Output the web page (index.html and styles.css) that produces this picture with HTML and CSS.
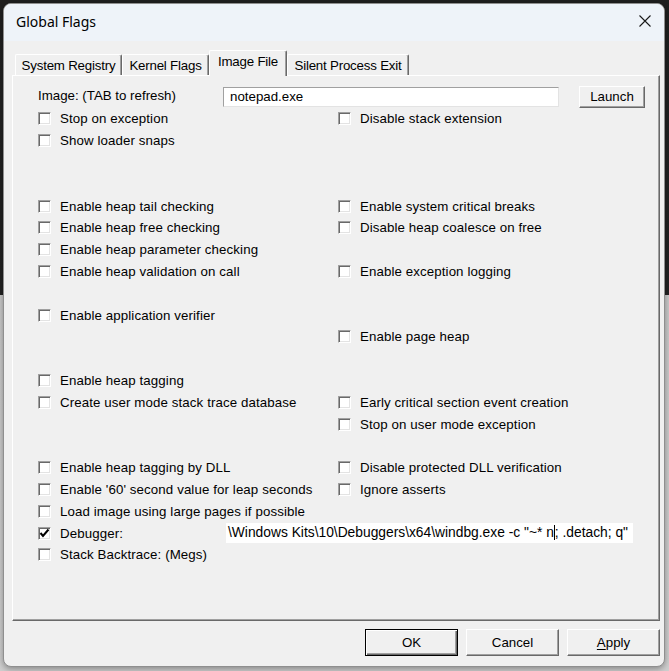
FILE: index.html
```html
<!DOCTYPE html>
<html>
<head>
<meta charset="utf-8">
<title>Global Flags</title>
<link rel="stylesheet" href="styles.css">
</head>
<body>
<div class="window">
  <div class="titlebar">
    <span class="title">Global Flags</span>
    <svg class="close" width="12" height="12" viewBox="0 0 12 12"><path d="M0.5 0.5 L11.5 11.5 M11.5 0.5 L0.5 11.5" stroke="#1a1a1a" stroke-width="1.1" fill="none"/></svg>
  </div>
  <div class="content">
    <div class="tabs">
      <div class="tab t1">System Registry</div>
      <div class="tab t2">Kernel Flags</div>
      <div class="tab t3 selected">Image File</div>
      <div class="tab t4">Silent Process Exit</div>
    </div>
    <div class="panel">
      <div class="image-row">
        <span class="image-label">Image: (TAB to refresh)</span>
        <div class="textbox">notepad.exe</div>
        <div class="btn launch">Launch</div>
      </div>
      <div class="grid">
        <label class="cb"><span class="box"></span>Stop on exception</label>
        <label class="cb"><span class="box"></span>Disable stack extension</label>
        <label class="cb"><span class="box"></span>Show loader snaps</label>
        <div></div>
        <div class="empty"></div><div></div>
        <div class="empty"></div><div></div>
        <label class="cb"><span class="box"></span>Enable heap tail checking</label>
        <label class="cb"><span class="box"></span>Enable system critical breaks</label>
        <label class="cb"><span class="box"></span>Enable heap free checking</label>
        <label class="cb"><span class="box"></span>Disable heap coalesce on free</label>
        <label class="cb"><span class="box"></span>Enable heap parameter checking</label>
        <div></div>
        <label class="cb"><span class="box"></span>Enable heap validation on call</label>
        <label class="cb"><span class="box"></span>Enable exception logging</label>
        <div class="empty"></div><div></div>
        <label class="cb"><span class="box"></span>Enable application verifier</label>
        <div></div>
        <div></div>
        <label class="cb"><span class="box"></span>Enable page heap</label>
        <div class="empty"></div><div></div>
        <label class="cb"><span class="box"></span>Enable heap tagging</label>
        <div></div>
        <label class="cb"><span class="box"></span>Create user mode stack trace database</label>
        <label class="cb"><span class="box"></span>Early critical section event creation</label>
        <div></div>
        <label class="cb"><span class="box"></span>Stop on user mode exception</label>
        <div class="empty"></div><div></div>
        <label class="cb"><span class="box"></span>Enable heap tagging by DLL</label>
        <label class="cb"><span class="box"></span>Disable protected DLL verification</label>
        <label class="cb"><span class="box"></span>Enable '60' second value for leap seconds</label>
        <label class="cb"><span class="box"></span>Ignore asserts</label>
        <label class="cb wide"><span class="box"></span>Load image using large pages if possible</label>
        <div class="debugger-row">
          <label class="cb dbg-label"><span class="box checked"><svg width="11" height="11" viewBox="0 0 11 11"><path d="M1.5 5 L4 8 L9.5 1.5" stroke="#000" stroke-width="2" fill="none"/></svg></span>Debugger:</label>
          <div class="dbg-field">\Windows Kits\10\Debuggers\x64\windbg.exe -c "~* n<span class="caret"></span>; .detach; q"</div>
        </div>
        <label class="cb wide"><span class="box"></span>Stack Backtrace: (Megs)</label>
      </div>
    </div>
    <div class="buttons">
      <div class="btn dlg default">OK</div>
      <div class="btn dlg">Cancel</div>
      <div class="btn dlg"><u>A</u>pply</div>
    </div>
  </div>
</div>
</body>
</html>
```

FILE: styles.css
```css
html, body {
  margin: 0;
  padding: 0;
}
body {
  width: 669px;
  height: 671px;
  overflow: hidden;
  background: linear-gradient(to bottom, #1f1f1f 0, #222 295px, #c9c9c9 295px, #cfcfcf 671px);
  font-family: "Liberation Sans", Arial, sans-serif;
  font-size: 13.3px;
  color: #000;
}
.window {
  margin: 3px 0 0 3px;
  width: 662px;
  height: 664px;
  box-sizing: border-box;
  border: 1px solid #8f8f8f;
  border-radius: 8px;
  background: #f0f0f0;
  overflow: hidden;
  box-shadow: 0 2px 6px rgba(0,0,0,0.35);
}
.titlebar {
  height: 37px;
  background: #eef3f9;
  display: flex;
  align-items: center;
  justify-content: space-between;
  padding: 0 13px 0 12px;
}
.title {
  font-family: "Noto Sans", "Open Sans", sans-serif;
  font-size: 14px;
  color: #000;
  margin-top: -2px;
}
.close {
  display: block;
  margin-top: -4px;
}
.content {
  padding: 9px 4px 0 8px;
}
.tabs {
  display: flex;
  align-items: flex-end;
  height: 25px;
  padding-left: 3px;
  position: relative;
  z-index: 2;
}
.tab {
  box-sizing: border-box;
  height: 21px;
  background: #f0f0f0;
  border-top: 1px solid #fff;
  border-left: 1px solid #fff;
  border-right: 1px solid #696969;
  box-shadow: inset -1px 0 #a0a0a0;
  border-radius: 2px 2px 0 0;
  display: flex;
  align-items: center;
  justify-content: center;
  white-space: nowrap;
  font-size: 13.3px;
  letter-spacing: -0.2px;
  padding-top: 1px;
}
.t1 { width: 107px; }
.t2 { width: 87px; }
.t3 { width: 78px; }
.t4 { width: 122px; }
.tab.selected {
  height: 26px;
  margin-bottom: -1px;
  padding-bottom: 4px;
  padding-top: 0;
}
.panel {
  box-sizing: border-box;
  width: 648px;
  height: 546px;
  border-top: 1px solid #fff;
  border-left: 1px solid #fff;
  border-right: 1px solid #696969;
  border-bottom: 1px solid #696969;
  box-shadow: inset -1px -1px #a0a0a0;
  padding: 10px 0 0 25px;
}
.image-row {
  display: flex;
  align-items: center;
  height: 22px;
}
.image-label {
  width: 185px;
  margin-top: -3px;
}
.textbox {
  box-sizing: border-box;
  width: 336px;
  height: 20px;
  background: #fff;
  border-top: 1px solid #a0a0a0;
  border-left: 1px solid #a0a0a0;
  border-right: 1px solid #e3e3e3;
  border-bottom: 1px solid #e3e3e3;
  padding: 0 0 0 6px;
  line-height: 18px;
}
.btn {
  box-sizing: border-box;
  background: #f0f0f0;
  border-top: 1px solid #fff;
  border-left: 1px solid #fff;
  border-right: 1px solid #696969;
  border-bottom: 1px solid #696969;
  box-shadow: inset -1px -1px #a0a0a0;
  display: flex;
  align-items: center;
  justify-content: center;
}
.launch {
  width: 66px;
  height: 22px;
  margin-left: 20px;
  padding-bottom: 1px;
}
.grid {
  display: grid;
  grid-template-columns: 300px 1fr;
  grid-auto-rows: 21.8px;
  letter-spacing: 0.1px;
}
.empty { height: 21.8px; }
.cb {
  display: flex;
  align-items: center;
  white-space: nowrap;
}
.wide { grid-column: 1 / 3; }
.box {
  box-sizing: border-box;
  width: 13px;
  height: 13px;
  flex: none;
  margin-right: 9px;
  background: #fff;
  border-top: 1px solid #a0a0a0;
  border-left: 1px solid #a0a0a0;
  border-right: 1px solid #fff;
  border-bottom: 1px solid #fff;
  box-shadow: inset 1px 1px #696969, inset -1px -1px #e3e3e3;
  display: flex;
  align-items: center;
  justify-content: center;
}
.box svg { display: block; }
.debugger-row {
  grid-column: 1 / 3;
  display: flex;
  align-items: center;
}
.dbg-label {
  width: 188px;
}
.dbg-field {
  box-sizing: border-box;
  width: 407px;
  height: 20px;
  background: #fff;
  padding-left: 2px;
  line-height: 20px;
  white-space: nowrap;
  overflow: hidden;
  font-size: 13.8px;
  letter-spacing: 0;
}
.caret {
  display: inline-block;
  width: 1px;
  height: 15px;
  background: #000;
  vertical-align: -3px;
}
.buttons {
  display: flex;
  justify-content: flex-end;
  gap: 8px;
  margin-top: 8px;
  width: 648px;
}
.dlg {
  width: 93px;
  height: 27px;
}
.dlg.default {
  border: 1px solid #000;
  box-shadow: inset 1px 1px #fff, inset -1px -1px #696969, inset -2px -2px #a0a0a0;
}
u { text-decoration-thickness: 1px; text-underline-offset: 2px; }
```
